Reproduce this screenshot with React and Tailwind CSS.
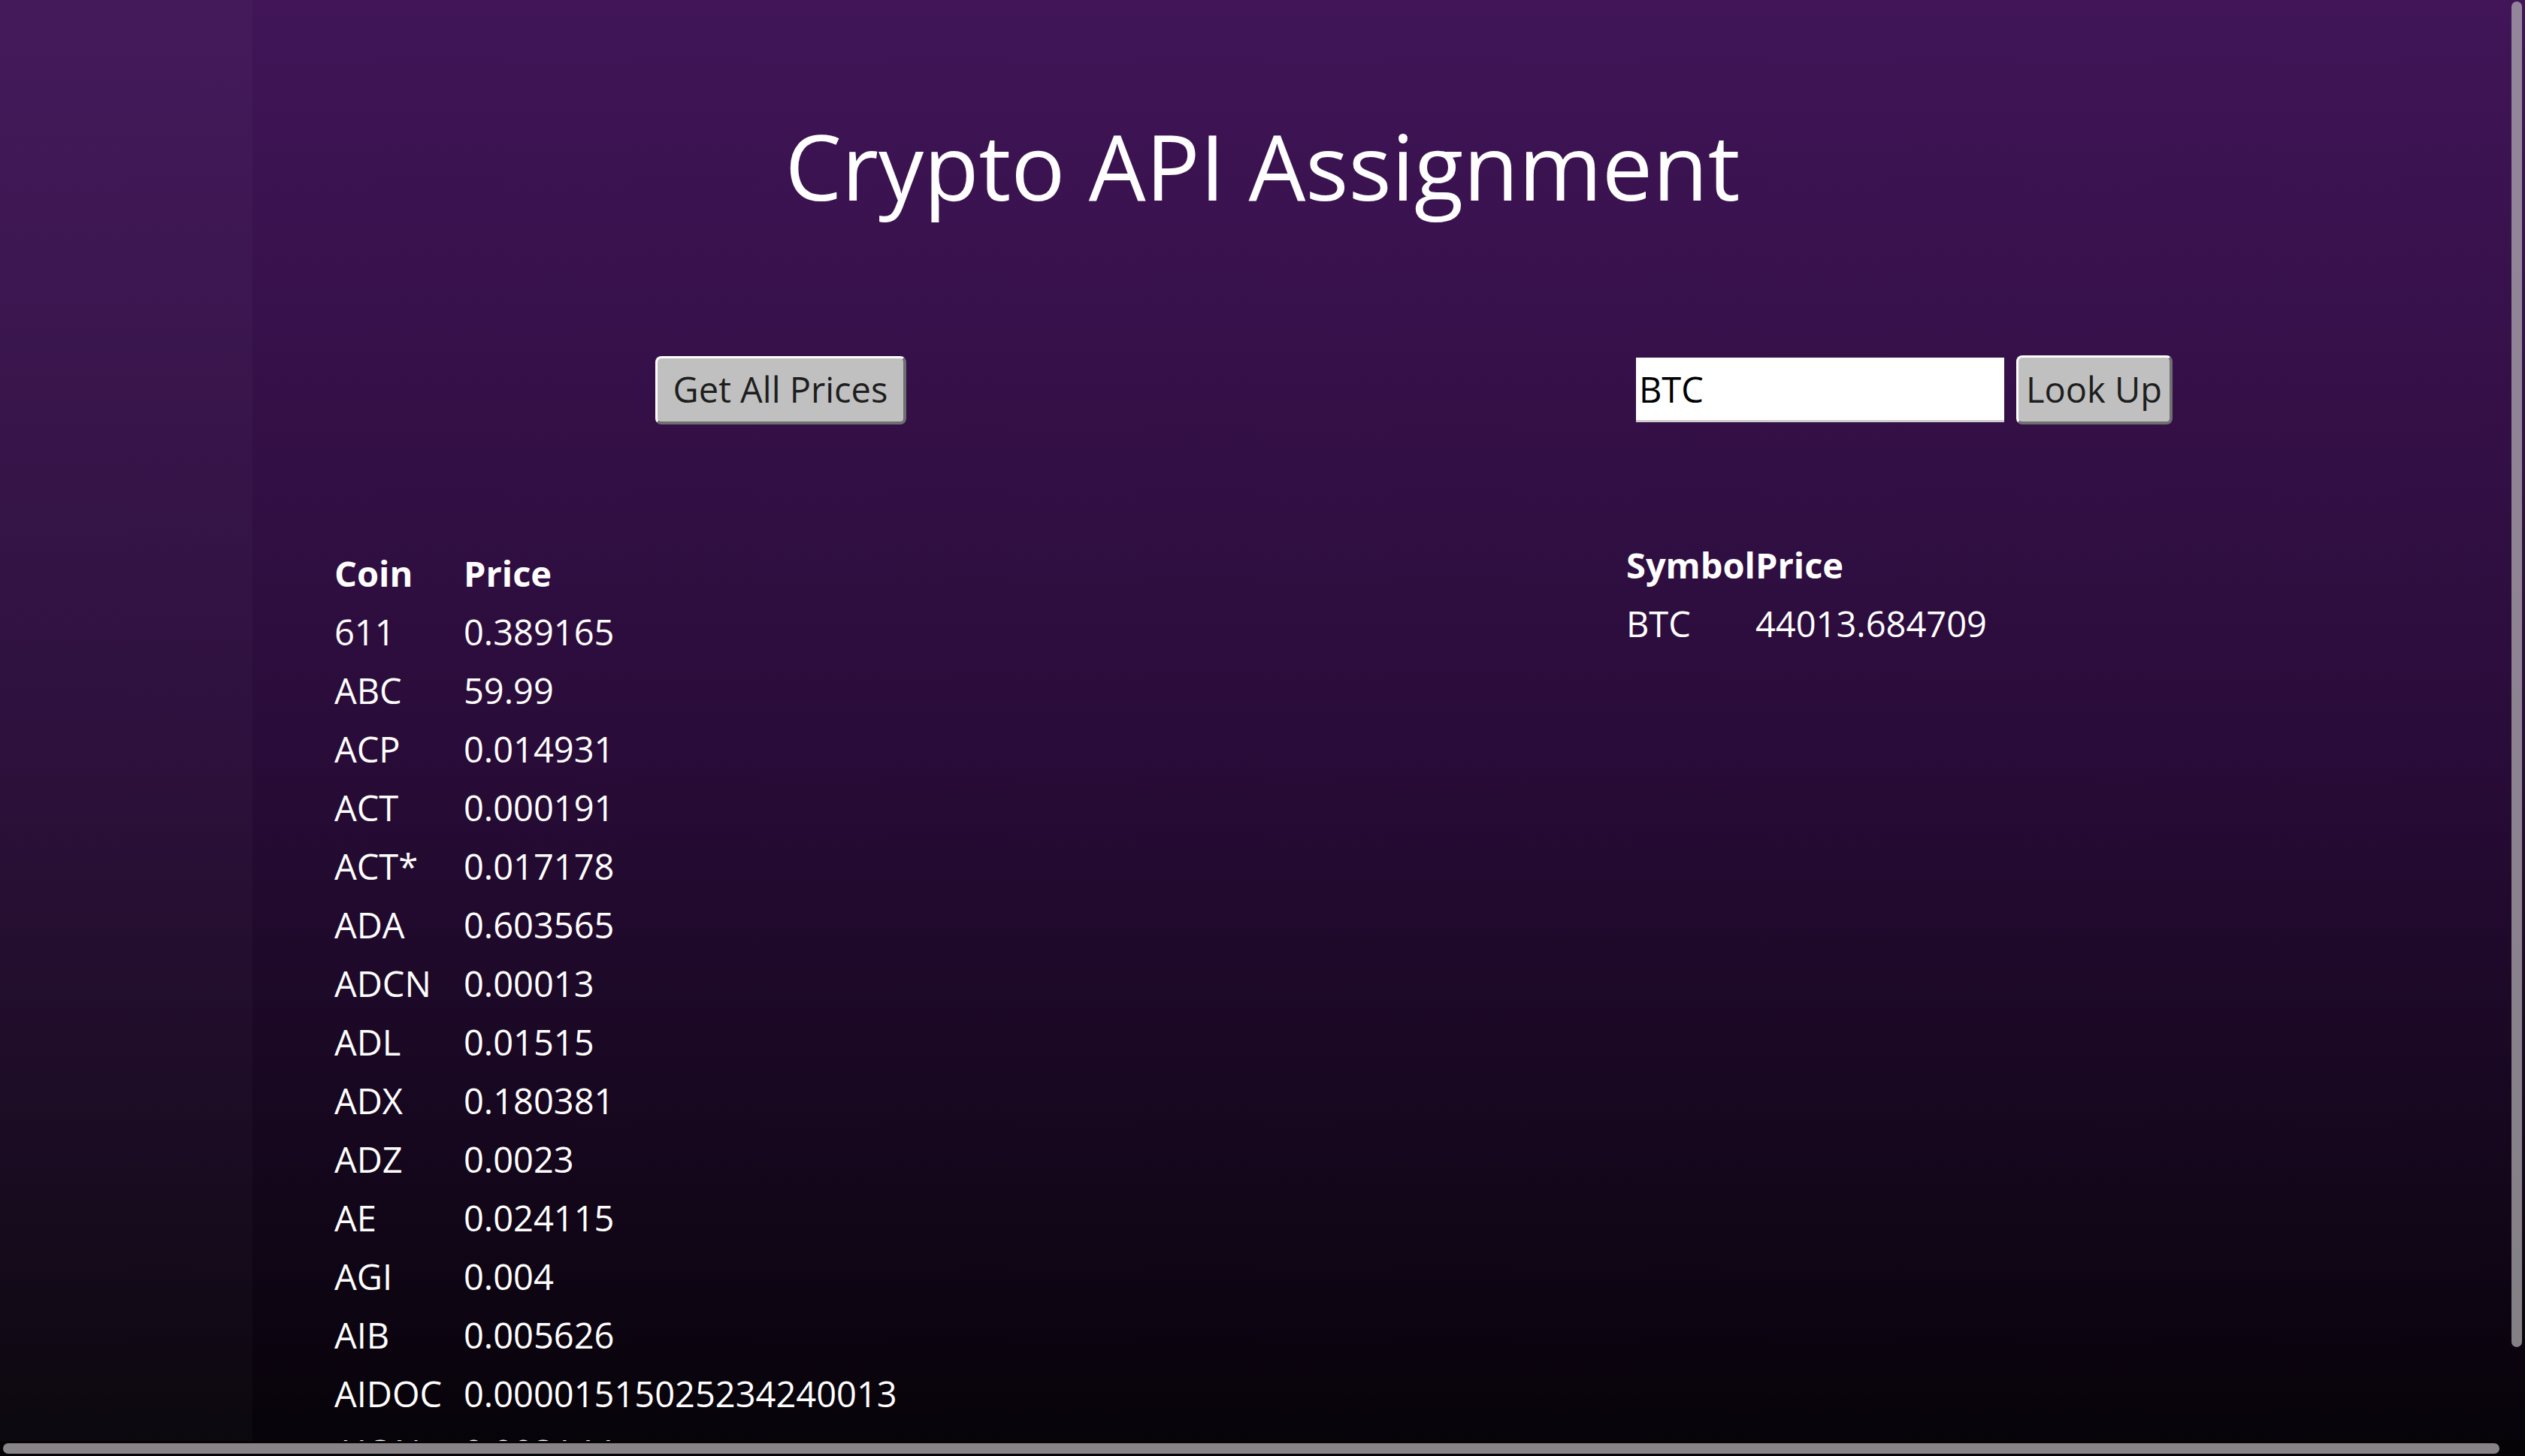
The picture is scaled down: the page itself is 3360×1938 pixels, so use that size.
const coins = [
    ['611', '0.389165'],
    ['ABC', '59.99'],
    ['ACP', '0.014931'],
    ['ACT', '0.000191'],
    ['ACT*', '0.017178'],
    ['ADA', '0.603565'],
    ['ADCN', '0.00013'],
    ['ADL', '0.01515'],
    ['ADX', '0.180381'],
    ['ADZ', '0.0023'],
    ['AE', '0.024115'],
    ['AGI', '0.004'],
    ['AIB', '0.005626'],
    ['AIDOC', '0.00001515025234240013'],
    ['AION', '0.003144'],
];

const PriceTable = ({ label, rows }) => {
    return (
        <table className="border-collapse text-[47px] leading-[78px]">
            <thead>
                <tr>
                    <th className="w-[172px] p-0 text-left font-bold">{label}</th>
                    <th className="p-0 text-left font-bold">Price</th>
                </tr>
            </thead>
            <tbody>
                {rows.map(([sym, price]) => (
                    <tr key={sym}>
                        <td className="p-0 whitespace-nowrap">{sym}</td>
                        <td className="p-0 whitespace-nowrap">{price}</td>
                    </tr>
                ))}
            </tbody>
        </table>
    );
}

const GrayButton = ({ children, className }) => {
    return (
        <button className={"flex items-center justify-center rounded-[8px] border-t-[3px] border-l-[3px] border-r-[4px] border-b-[4px] border-t-white border-l-white border-r-[#6f6f6f] border-b-[#6f6f6f] bg-[#c0c0c0] text-[47px] leading-none text-[#1e1e1e] " + className}>
            {children}
        </button>
    );
}

export default function App() {
    return (
        <div className="relative h-screen w-full overflow-hidden bg-[linear-gradient(to_bottom,#411558_0%,#2a0c3a_50%,#060308_100%)] font-['Open_Sans','Noto_Sans',sans-serif] text-white">
            <div className="pointer-events-none absolute inset-y-0 left-0 w-[336px] bg-white/[0.025]" />

            <h1 className="pt-[161px] text-center text-[120px] leading-none font-normal">Crypto API Assignment</h1>

            <div className="mt-[192px] flex">
                <div className="flex w-[2164px] shrink-0 flex-col pl-[445px]">
                    <div className="flex h-[92px] items-center">
                        <GrayButton className="ml-[427px] h-[91px] w-[334px]">Get All Prices</GrayButton>
                    </div>
                    <div className="mt-[159px]">
                        <PriceTable label="Coin" rows={coins} />
                    </div>
                </div>

                <div className="flex flex-col">
                    <div className="flex h-[92px] items-center">
                        <input
                            defaultValue="BTC"
                            className="ml-[13px] h-[86px] w-[490px] border-b-[3px] border-b-[#cfcfcf] bg-white pl-[4px] text-[47px] text-black outline-none"
                        />
                        <GrayButton className="ml-[16px] h-[92px] w-[208px]">Look Up</GrayButton>
                    </div>
                    <div className="mt-[148px]">
                        <PriceTable label="Symbol" rows={[['BTC', '44013.684709']]} />
                    </div>
                </div>
            </div>

            <div className="absolute right-[4px] top-[2px] h-[1791px] w-[14px] rounded-full bg-[rgba(182,182,182,0.7)]" />
            <div className="absolute inset-x-0 bottom-0 h-[20px] bg-[#050306]" />
            <div className="absolute bottom-[3px] left-[4px] right-[34px] h-[14px] rounded-full bg-[#878387]" />
        </div>
    );
}
